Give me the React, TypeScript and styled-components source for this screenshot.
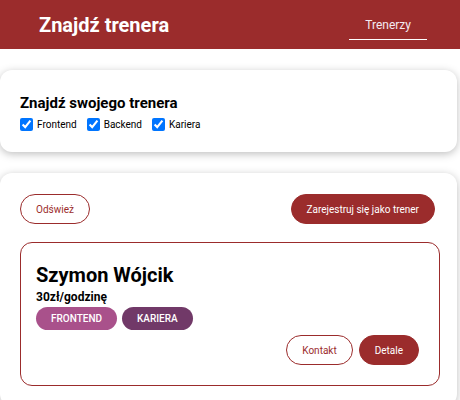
import React from "react";
import styled, { createGlobalStyle } from "styled-components";

const Global = createGlobalStyle`
  * { box-sizing: border-box; }
  html, body { margin: 0; padding: 0; background: #fff; }
  body { font-family: Roboto, "Noto Sans", sans-serif; color: #000; }
`;

const Header = styled.header`
  height: 49px;
  background: #9b2c2c;
  display: flex;
  align-items: center;
  justify-content: space-between;
  padding: 0 33px 0 39px;
`;

const Brand = styled.h1`
  margin: 0;
  font-size: 20px;
  font-weight: 700;
  color: #fff;
`;

const NavLink = styled.a`
  display: block;
  padding: 6px 16px 6px;
  margin-top: 2px;
  font-size: 12px;
  line-height: 15px;
  color: #f4eaf2;
  text-decoration: none;
  border-bottom: 1px solid #fff;
`;

const Card = styled.section<{ $pad?: string }>`
  margin: 21px 3px 19px 0;
  background: #fff;
  border-radius: 12px;
  box-shadow: 0 2px 8px rgba(0, 0, 0, 0.26);
  padding: ${(p) => p.$pad ?? "20px"};
`;

const FilterTitle = styled.h2`
  margin: 0 0 3px;
  font-size: 15px;
  font-weight: 700;
`;

const FilterRow = styled.div`
  display: flex;
  gap: 10px;
  align-items: center;
  height: 19px;
`;

const Check = styled.label`
  display: flex;
  align-items: center;
  gap: 4px;
  font-size: 10px;

  input {
    margin: 0;
    width: 13px;
    height: 13px;
  }
`;

const Controls = styled.div`
  display: flex;
  justify-content: space-between;
  padding: 0 5px 0 0;
`;

const Button = styled.button<{ $filled?: boolean }>`
  height: 30px;
  padding: 0 15px;
  border-radius: 15px;
  border: 1px solid #9b2c2c;
  background: ${(p) => (p.$filled ? "#9b2c2c" : "#fff")};
  color: ${(p) => (p.$filled ? "#fff" : "#9b2c2c")};
  font-family: Roboto, sans-serif;
  font-size: 10px;
  cursor: pointer;
`;

const CoachList = styled.ul`
  list-style: none;
  margin: 18px 0 0;
  padding: 0;
`;

const CoachItem = styled.li`
  border: 1px solid #9b2c2c;
  border-radius: 12px;
  padding: 20px 20px 20px 15px;
`;

const Name = styled.h3`
  margin: 0;
  font-size: 20px;
  font-weight: 700;
`;

const Rate = styled.h4`
  margin: 3px 0 3px;
  font-size: 12px;
  font-weight: 700;
`;

const Badges = styled.div`
  display: flex;
  gap: 5px;
`;

const Badge = styled.span<{ $bg: string }>`
  display: inline-flex;
  align-items: center;
  height: 23px;
  padding: 0 15px;
  border-radius: 12px;
  background: ${(p) => p.$bg};
  color: #fff;
  font-size: 10px;
  font-weight: 500;
`;

const Actions = styled.div`
  display: flex;
  justify-content: flex-end;
  gap: 6px;
  margin-top: 5px;

  button {
    padding: 0 15px;
  }
`;

export default function App() {
  return (
    <>
      <Global />
      <Header>
        <Brand>Znajdź trenera</Brand>
        <NavLink href="#">Trenerzy</NavLink>
      </Header>
      <Card $pad="24px 20px 18px">
        <FilterTitle>Znajdź swojego trenera</FilterTitle>
        <FilterRow>
          <Check>
            <input type="checkbox" defaultChecked />
            Frontend
          </Check>
          <Check>
            <input type="checkbox" defaultChecked />
            Backend
          </Check>
          <Check>
            <input type="checkbox" defaultChecked />
            Kariera
          </Check>
        </FilterRow>
      </Card>
      <Card $pad="21px 17px 20px 20px">
        <Controls>
          <Button>Odśwież</Button>
          <Button $filled>Zarejestruj się jako trener</Button>
        </Controls>
        <CoachList>
          <CoachItem>
            <Name>Szymon Wójcik</Name>
            <Rate>30zł/godzinę</Rate>
            <Badges>
              <Badge $bg="#a9518b">FRONTEND</Badge>
              <Badge $bg="#713968">KARIERA</Badge>
            </Badges>
            <Actions>
              <Button>Kontakt</Button>
              <Button $filled>Detale</Button>
            </Actions>
          </CoachItem>
        </CoachList>
      </Card>
    </>
  );
}
